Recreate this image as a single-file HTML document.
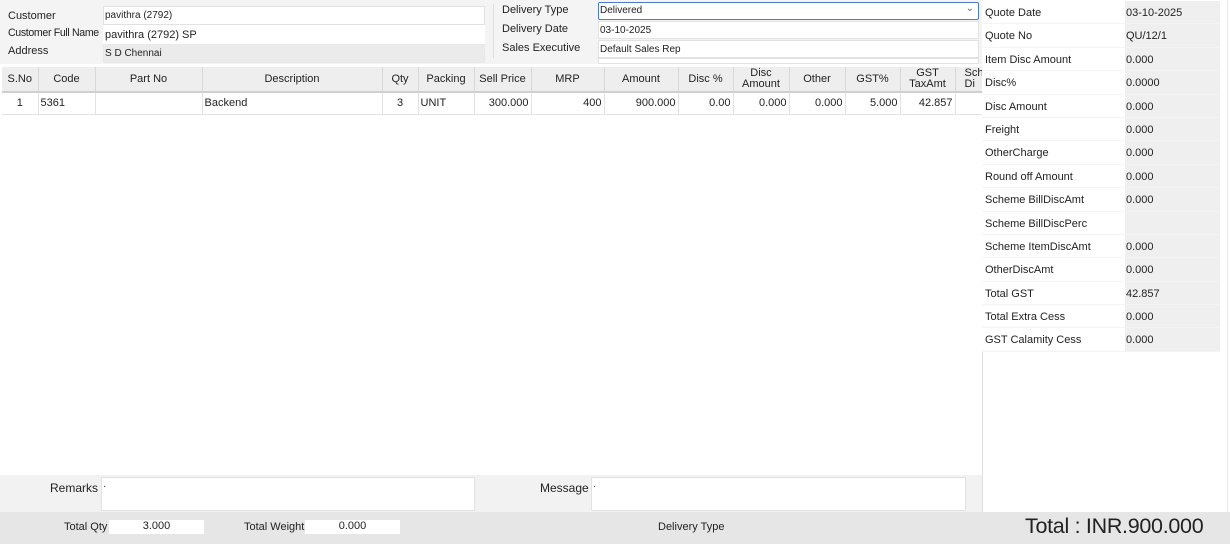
<!DOCTYPE html>
<html><head><meta charset="utf-8"><style>
*{box-sizing:border-box;margin:0;padding:0}
body{width:1230px;height:544px;background:#fff;font-family:"Liberation Sans",sans-serif;font-size:11px;color:#222;position:relative;overflow:hidden}
.a{position:absolute}
.lbl{position:absolute;font-size:11px;color:#222}
.inp{position:absolute;background:#fff;border:1px solid #e2e2e2;font-size:10px;padding:3px 0 0 1px;height:19px}
table{border-collapse:collapse;position:absolute;left:2px;top:67px;table-layout:fixed}
th{background:#eeeeee;font-weight:normal;font-size:11px;height:25px;border-right:1px solid #d8d8d8;border-bottom:2px solid #d0d0d0;line-height:11px;text-align:center;color:#222}
td{height:22px;border-right:1px solid #e2e2e2;border-bottom:1px solid #e2e2e2;font-size:11px;padding:0 2px}
.r{text-align:right}
.rp{position:absolute;left:982px;width:238px}
.rp div.row{height:23.4px;display:flex;border-bottom:1px solid #f4f4f4}
.rp .k{width:143px;background:#fff;padding:6px 0 0 3px;font-size:11px}
.rp .v{width:95px;background:#efefef;padding:6px 0 0 1px;font-size:11px}
</style></head><body>
<div class="a" style="left:0;top:0;width:982px;height:64px;background:#f4f4f4"></div>
<div class="a" style="left:493px;top:4px;width:1px;height:54px;background:#ddd"></div>
<div class="lbl" style="left:8px;top:10px">Customer</div>
<div class="lbl" style="left:8px;top:27px;letter-spacing:-0.35px;font-size:10.6px">Customer Full Name</div>
<div class="lbl" style="left:8px;top:45px">Address</div>
<div class="inp" style="left:103px;top:6px;width:382px;height:19px;padding-top:3px">pavithra (2792)</div>
<div class="inp" style="left:103px;top:25px;width:382px;height:19px;font-size:11px;padding-top:3px;border-color:#fff">pavithra (2792) SP</div>
<div class="inp" style="left:103px;top:44px;width:382px;height:19px;background:#ebebeb;border-color:#e8e8e8">S D Chennai</div>

<div class="lbl" style="left:502px;top:4px">Delivery Type</div>
<div class="lbl" style="left:502px;top:23px">Delivery Date</div>
<div class="lbl" style="left:502px;top:42px">Sales Executive</div>
<div class="inp" style="left:598px;top:2px;width:381px;height:18px;border:1px solid #4a7bd0;border-radius:2px;padding-top:2px">Delivered<span style="position:absolute;right:4px;top:0;color:#666;font-size:10px">&#8964;</span></div>
<div class="inp" style="left:598px;top:21px;width:381px;height:18px">03-10-2025</div>
<div class="inp" style="left:598px;top:40px;width:381px;height:18px">Default Sales Rep</div>
<div class="inp" style="left:598px;top:58px;width:381px;height:6px;padding:0"></div>

<table>
<colgroup><col style="width:36px"><col style="width:57px"><col style="width:107px"><col style="width:180px"><col style="width:36px"><col style="width:56px"><col style="width:57px"><col style="width:73px"><col style="width:74px"><col style="width:55px"><col style="width:56px"><col style="width:56px"><col style="width:55px"><col style="width:55px"><col style="width:25px"></colgroup>
<tr><th>S.No</th><th>Code</th><th>Part No</th><th>Description</th><th>Qty</th><th>Packing</th><th>Sell Price</th><th>MRP</th><th>Amount</th><th>Disc %</th><th>Disc<br>Amount</th><th>Other</th><th>GST%</th><th>GST<br>TaxAmt</th><th style="overflow:hidden;white-space:nowrap;text-align:left;padding-left:9px">Sch<br>Di</th></tr>
<tr><td style="text-align:center">1</td><td>5361</td><td></td><td>Backend</td><td style="text-align:center">3</td><td>UNIT</td><td class="r">300.000</td><td class="r">400</td><td class="r">900.000</td><td class="r">0.00</td><td class="r">0.000</td><td class="r">0.000</td><td class="r">5.000</td><td class="r">42.857</td><td></td></tr>
</table>

<div class="a" style="left:982px;top:0;width:1px;height:512px;background:#e0e0e0"></div>
<div class="a" style="left:1227px;top:0;width:1px;height:512px;background:#e8e8e8"></div>
<div class="rp" style="top:1px">
<div class="row"><div class="k">Quote Date</div><div class="v">03-10-2025</div></div>
<div class="row"><div class="k">Quote No</div><div class="v">QU/12/1</div></div>
<div class="row"><div class="k">Item Disc Amount</div><div class="v">0.000</div></div>
<div class="row"><div class="k">Disc%</div><div class="v">0.0000</div></div>
<div class="row"><div class="k">Disc Amount</div><div class="v">0.000</div></div>
<div class="row"><div class="k">Freight</div><div class="v">0.000</div></div>
<div class="row"><div class="k">OtherCharge</div><div class="v">0.000</div></div>
<div class="row"><div class="k">Round off Amount</div><div class="v">0.000</div></div>
<div class="row"><div class="k">Scheme BillDiscAmt</div><div class="v">0.000</div></div>
<div class="row"><div class="k">Scheme BillDiscPerc</div><div class="v"></div></div>
<div class="row"><div class="k">Scheme ItemDiscAmt</div><div class="v">0.000</div></div>
<div class="row"><div class="k">OtherDiscAmt</div><div class="v">0.000</div></div>
<div class="row"><div class="k">Total GST</div><div class="v">42.857</div></div>
<div class="row"><div class="k">Total Extra Cess</div><div class="v">0.000</div></div>
<div class="row"><div class="k">GST Calamity Cess</div><div class="v">0.000</div></div>
</div>

<div class="a" style="left:0;top:475px;width:982px;height:37px;background:#f2f2f2"></div>
<div class="lbl" style="left:50px;top:481px;font-size:12px">Remarks</div>
<div class="inp" style="left:101px;top:477px;width:374px;height:34px;font-size:10px">·</div>
<div class="lbl" style="left:540px;top:481px;font-size:12px">Message</div>
<div class="inp" style="left:591px;top:477px;width:375px;height:34px;font-size:10px">·</div>

<div class="a" style="left:0;top:512px;width:1230px;height:32px;background:#e6e6e6"></div>
<div class="lbl" style="left:64px;top:521px">Total Qty</div>
<div class="a" style="left:109px;top:520px;width:95px;height:14px;background:#fff;text-align:center;font-size:11px">3.000</div>
<div class="lbl" style="left:244px;top:521px">Total Weight</div>
<div class="a" style="left:305px;top:520px;width:95px;height:14px;background:#fff;text-align:center;font-size:11px">0.000</div>
<div class="lbl" style="left:658px;top:521px">Delivery Type</div>
<div class="a" style="left:1025px;top:514px;font-size:21.5px;letter-spacing:-0.3px;color:#222">Total : INR.900.000</div>
</body></html>
